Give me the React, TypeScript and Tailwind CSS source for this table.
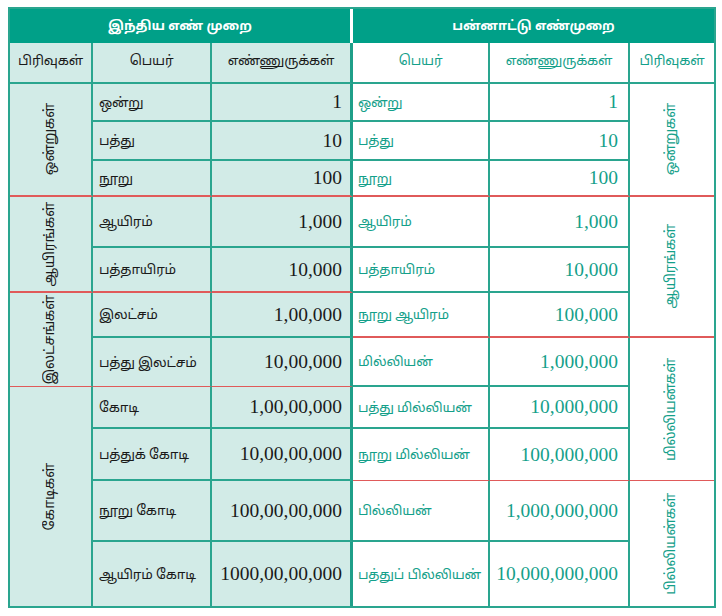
import React from "react";

type Row = { name: string; num: string };

const leftRows: Row[] = [
  { name: "ஒன்று", num: "1" },
  { name: "பத்து", num: "10" },
  { name: "நூறு", num: "100" },
  { name: "ஆயிரம்", num: "1,000" },
  { name: "பத்தாயிரம்", num: "10,000" },
  { name: "இலட்சம்", num: "1,00,000" },
  { name: "பத்து இலட்சம்", num: "10,00,000" },
  { name: "கோடி", num: "1,00,00,000" },
  { name: "பத்துக் கோடி", num: "10,00,00,000" },
  { name: "நூறு கோடி", num: "100,00,00,000" },
  { name: "ஆயிரம் கோடி", num: "1000,00,00,000" },
];

const rightRows: Row[] = [
  { name: "ஒன்று", num: "1" },
  { name: "பத்து", num: "10" },
  { name: "நூறு", num: "100" },
  { name: "ஆயிரம்", num: "1,000" },
  { name: "பத்தாயிரம்", num: "10,000" },
  { name: "நூறு ஆயிரம்", num: "100,000" },
  { name: "மில்லியன்", num: "1,000,000" },
  { name: "பத்து மில்லியன்", num: "10,000,000" },
  { name: "நூறு மில்லியன்", num: "100,000,000" },
  { name: "பில்லியன்", num: "1,000,000,000" },
  { name: "பத்துப் பில்லியன்", num: "10,000,000,000" },
];

type Cat = { label: string; start: number; span: number };

const leftCats: Cat[] = [
  { label: "ஒன்றுகள்", start: 0, span: 3 },
  { label: "ஆயிரங்கள்", start: 3, span: 2 },
  { label: "இலட்சங்கள்", start: 5, span: 2 },
  { label: "கோடிகள்", start: 7, span: 4 },
];

const rightCats: Cat[] = [
  { label: "ஒன்றுகள்", start: 0, span: 3 },
  { label: "ஆயிரங்கள்", start: 3, span: 3 },
  { label: "மில்லியன்கள்", start: 6, span: 3 },
  { label: "பில்லியன்கள்", start: 9, span: 2 },
];

// bottom line kind after each body row index (0-based)
const leftLine: Record<number, string> = { 2: "red2", 4: "red2", 6: "red1", 10: "none" };
const rightLine: Record<number, string> = { 2: "red2", 5: "red2", 8: "red1", 10: "none" };

function bb(kind: string): string {
  if (kind === "red2") return "border-b-2 border-b-[#e05a5a]";
  if (kind === "red1") return "border-b border-b-[#e05a5a]";
  if (kind === "none") return "";
  return "border-b-2 border-b-[#2aa58f]";
}

function spanClass(n: number): string {
  if (n === 2) return "row-span-2";
  if (n === 3) return "row-span-3";
  if (n === 4) return "row-span-4";
  return "";
}

const TAMIL = "font-['Noto_Sans_Tamil','Lohit_Tamil','Noto_Sans','Liberation_Sans',sans-serif]";
const NUM = "font-['Liberation_Serif','DejaVu_Serif',serif] text-[19.5px]";
const NAME = "text-[13.5px] tracking-[-0.2px] whitespace-nowrap";
const VERT = "[writing-mode:vertical-rl] rotate-180 text-[14px] tracking-[-0.2px] leading-none whitespace-nowrap";

export default function App() {
  const cells: React.ReactNode[] = [];

  for (let i = 0; i < 11; i++) {
    const lk = leftLine[i] ?? "teal";
    const rk = rightLine[i] ?? "teal";
    const lc = leftCats.find((c) => c.start === i);
    if (lc) {
      const endIdx = lc.start + lc.span - 1;
      const k = leftLine[endIdx] ?? "teal";
      cells.push(
        <div
          key={`lc${i}`}
          className={`${spanClass(lc.span)} bg-[#d2ebe7] border-r-2 border-r-[#2aa58f] ${bb(k)} flex items-center justify-center`}
        >
          <span className={`${VERT} text-[#1a1a1a]`}>{lc.label}</span>
        </div>
      );
    }
    cells.push(
      <div
        key={`ln${i}`}
        className={`bg-[#d2ebe7] border-r-2 border-r-[#2aa58f] ${bb(lk)} flex items-center pl-[6px] pt-[4px] ${NAME} text-[#1a1a1a]`}
      >
        {leftRows[i].name}
      </div>
    );
    cells.push(
      <div
        key={`lv${i}`}
        className={`bg-[#d2ebe7] border-r-[3px] border-r-[#1f9f89] ${bb(lk)} flex items-center justify-end pr-[8px] ${NUM} text-[#1a1a1a]`}
      >
        {leftRows[i].num}
      </div>
    );
    cells.push(
      <div
        key={`rn${i}`}
        className={`bg-white border-r-2 border-r-[#2aa58f] ${bb(rk)} flex items-center pl-[5px] pt-[4px] ${NAME} text-[#14a08a]`}
      >
        {rightRows[i].name}
      </div>
    );
    cells.push(
      <div
        key={`rv${i}`}
        className={`bg-white border-r-2 border-r-[#2aa58f] ${bb(rk)} flex items-center justify-end pr-[10px] ${NUM} text-[#14a08a]`}
      >
        {rightRows[i].num}
      </div>
    );
    const rc = rightCats.find((c) => c.start === i);
    if (rc) {
      const endIdx = rc.start + rc.span - 1;
      const k = rightLine[endIdx] ?? "teal";
      cells.push(
        <div
          key={`rc${i}`}
          className={`${spanClass(rc.span)} bg-white ${bb(k)} flex items-center justify-center`}
        >
          <span className={`${VERT} text-[#14a08a]`}>{rc.label}</span>
        </div>
      );
    }
  }

  return (
    <div className={`w-[722px] h-[616px] bg-white pt-[7px] pl-[8px] ${TAMIL}`}>
      <div className="w-[708px] border-2 border-[#2aa58f]">
        <div className="grid grid-cols-[83px_119px_141px_137px_140px_84px] grid-rows-[34px_41px_38px_39px_36px_51px_45px_45px_49px_42px_52px_61px_64px]">
          <div className="col-span-3 bg-[#00a088] border-r-[3px] border-r-white flex items-center justify-center pt-[4px] text-white font-bold text-[13px]">
            இந்திய எண் முறை
          </div>
          <div className="col-span-3 bg-[#00a088] flex items-center justify-center pt-[4px] text-white font-bold text-[13px]">
            பன்னாட்டு எண்முறை
          </div>

          <div className={`bg-[#d2ebe7] border-r-2 border-r-[#2aa58f] border-b-2 border-b-[#2aa58f] flex items-center justify-center ${NAME} text-[#1a1a1a]`}>
            பிரிவுகள்
          </div>
          <div className={`bg-[#d2ebe7] border-r-2 border-r-[#2aa58f] border-b-2 border-b-[#2aa58f] flex items-center justify-center ${NAME} text-[#1a1a1a]`}>
            பெயர்
          </div>
          <div className={`bg-[#d2ebe7] border-r-[3px] border-r-[#1f9f89] border-b-2 border-b-[#2aa58f] flex items-center justify-center ${NAME} text-[#1a1a1a]`}>
            எண்ணுருக்கள்
          </div>
          <div className={`bg-white border-r-2 border-r-[#2aa58f] border-b-2 border-b-[#2aa58f] flex items-center justify-center ${NAME} text-[#14a08a]`}>
            பெயர்
          </div>
          <div className={`bg-white border-r-2 border-r-[#2aa58f] border-b-2 border-b-[#2aa58f] flex items-center justify-center ${NAME} text-[#14a08a]`}>
            எண்ணுருக்கள்
          </div>
          <div className={`bg-white border-b-2 border-b-[#2aa58f] flex items-center justify-center ${NAME} text-[#14a08a]`}>
            பிரிவுகள்
          </div>

          {cells}
        </div>
      </div>
    </div>
  );
}
